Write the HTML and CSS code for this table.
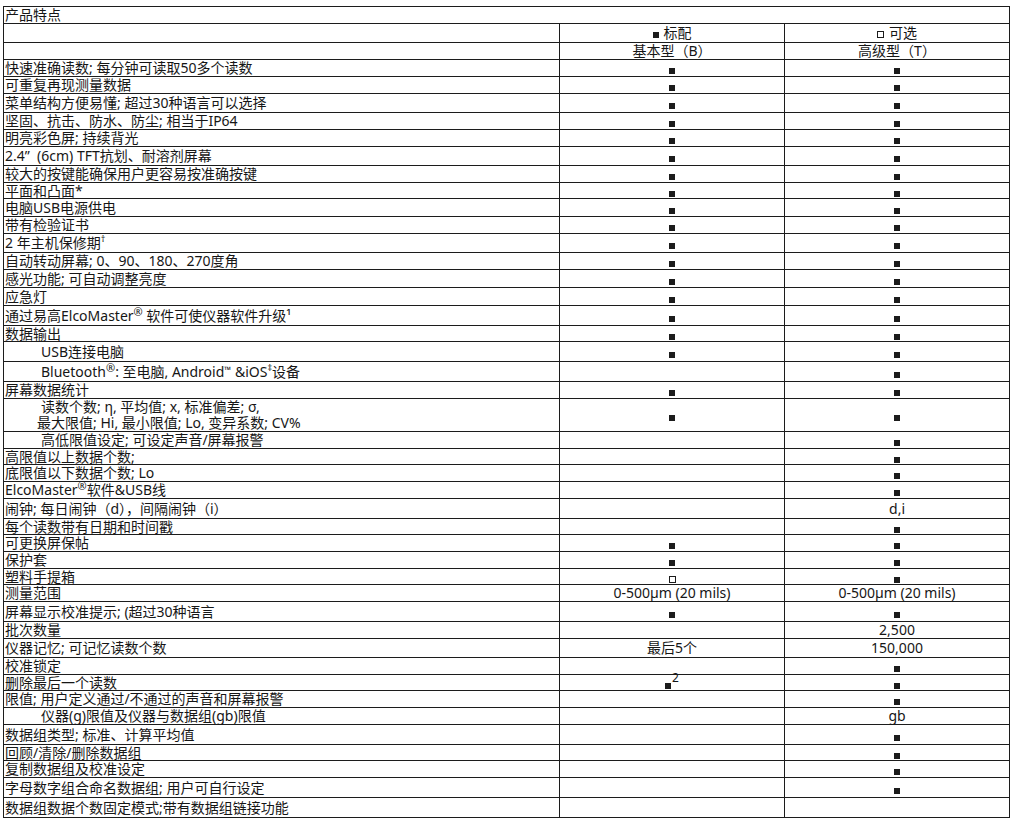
FILE: index.html
```html
<!DOCTYPE html>
<html lang="zh-CN">
<head>
<meta charset="utf-8">
<title>产品特点</title>
<link rel="stylesheet" href="styles.css">
</head>
<body>
<div class="page">
<table class="spec">
  <colgroup><col class="c-feat"><col class="c-opt"><col class="c-opt"></colgroup>
  <tbody>
    <tr class="h17"><td colspan="3">产品特点</td></tr>
    <tr class="h19"><td></td><td class="ctr"><span class="sq key"></span>标配</td><td class="ctr"><span class="sq open key"></span>可选</td></tr>
    <tr class="h17"><td></td><td class="ctr">基本型（B）</td><td class="ctr">高级型（T）</td></tr>
    <tr class="h17"><td>快速准确读数; 每分钟可读取50多个读数</td><td class="ctr"><span class="sq"></span></td><td class="ctr"><span class="sq"></span></td></tr>
    <tr class="h17"><td>可重复再现测量数据</td><td class="ctr"><span class="sq"></span></td><td class="ctr"><span class="sq"></span></td></tr>
    <tr class="h19"><td>菜单结构方便易懂; 超过30种语言可以选择</td><td class="ctr"><span class="sq"></span></td><td class="ctr"><span class="sq"></span></td></tr>
    <tr class="h17"><td>坚固、抗击、防水、防尘; 相当于IP64</td><td class="ctr"><span class="sq"></span></td><td class="ctr"><span class="sq"></span></td></tr>
    <tr class="h17"><td>明亮彩色屏; 持续背光</td><td class="ctr"><span class="sq"></span></td><td class="ctr"><span class="sq"></span></td></tr>
    <tr class="h19"><td>2.4”&nbsp;&nbsp;(6cm) TFT抗划、耐溶剂屏幕</td><td class="ctr"><span class="sq"></span></td><td class="ctr"><span class="sq"></span></td></tr>
    <tr class="h17"><td>较大的按键能确保用户更容易按准确按键</td><td class="ctr"><span class="sq"></span></td><td class="ctr"><span class="sq"></span></td></tr>
    <tr class="h16"><td>平面和凸面*</td><td class="ctr"><span class="sq"></span></td><td class="ctr"><span class="sq"></span></td></tr>
    <tr class="h18"><td>电脑USB电源供电</td><td class="ctr"><span class="sq"></span></td><td class="ctr"><span class="sq"></span></td></tr>
    <tr class="h17"><td>带有检验证书</td><td class="ctr"><span class="sq"></span></td><td class="ctr"><span class="sq"></span></td></tr>
    <tr class="h19"><td>2 年主机保修期<sup class="mark">†</sup></td><td class="ctr"><span class="sq"></span></td><td class="ctr"><span class="sq"></span></td></tr>
    <tr class="h17"><td>自动转动屏幕; 0、90、180、270度角</td><td class="ctr"><span class="sq"></span></td><td class="ctr"><span class="sq"></span></td></tr>
    <tr class="h18"><td>感光功能; 可自动调整亮度</td><td class="ctr"><span class="sq"></span></td><td class="ctr"><span class="sq"></span></td></tr>
    <tr class="h18"><td>应急灯</td><td class="ctr"><span class="sq"></span></td><td class="ctr"><span class="sq"></span></td></tr>
    <tr class="h20"><td>通过易高ElcoMaster<sup class="reg">®</sup> 软件可使仪器软件升级¹</td><td class="ctr"><span class="sq"></span></td><td class="ctr"><span class="sq"></span></td></tr>
    <tr class="h16"><td>数据输出</td><td class="ctr"><span class="sq"></span></td><td class="ctr"><span class="sq"></span></td></tr>
    <tr class="h20"><td class="ind">USB连接电脑</td><td class="ctr"><span class="sq"></span></td><td class="ctr"><span class="sq"></span></td></tr>
    <tr class="h20"><td class="ind">Bluetooth<sup class="reg">®</sup>: 至电脑, Android<sup class="tm">™</sup> &amp;iOS<sup class="mark">‡</sup>设备</td><td></td><td class="ctr"><span class="sq"></span></td></tr>
    <tr class="h17"><td>屏幕数据统计</td><td class="ctr"><span class="sq"></span></td><td class="ctr"><span class="sq"></span></td></tr>
    <tr class="h32"><td class="ind2"><span class="first">读数个数; η, 平均值; x, 标准偏差; σ,</span><br>最大限值; Hi, 最小限值; Lo, 变异系数; CV%</td><td class="ctr"><span class="sq"></span></td><td class="ctr"><span class="sq"></span></td></tr>
    <tr class="h17"><td class="ind">高低限值设定; 可设定声音/屏幕报警</td><td></td><td class="ctr"><span class="sq"></span></td></tr>
    <tr class="h16"><td>高限值以上数据个数;</td><td></td><td class="ctr"><span class="sq"></span></td></tr>
    <tr class="h17"><td>底限值以下数据个数; Lo</td><td></td><td class="ctr"><span class="sq"></span></td></tr>
    <tr class="h17"><td>ElcoMaster<sup class="reg">®</sup>软件&amp;USB线</td><td></td><td class="ctr"><span class="sq"></span></td></tr>
    <tr class="h20"><td>闹钟; 每日闹钟（d），间隔闹钟（i）</td><td></td><td class="ctr">d,i</td></tr>
    <tr class="h16"><td>每个读数带有日期和时间戳</td><td></td><td class="ctr"><span class="sq"></span></td></tr>
    <tr class="h17"><td>可更换屏保帖</td><td class="ctr"><span class="sq"></span></td><td class="ctr"><span class="sq"></span></td></tr>
    <tr class="h17"><td>保护套</td><td class="ctr"><span class="sq"></span></td><td class="ctr"><span class="sq"></span></td></tr>
    <tr class="h16"><td>塑料手提箱</td><td class="ctr"><span class="sq open"></span></td><td class="ctr"><span class="sq"></span></td></tr>
    <tr class="h17"><td>测量范围</td><td class="ctr">0-500µm (20 mils)</td><td class="ctr">0-500µm (20 mils)</td></tr>
    <tr class="h20"><td>屏幕显示校准提示; (超过30种语言</td><td class="ctr"><span class="sq"></span></td><td class="ctr"><span class="sq"></span></td></tr>
    <tr class="h17"><td>批次数量</td><td></td><td class="ctr">2,500</td></tr>
    <tr class="h19"><td>仪器记忆; 可记忆读数个数</td><td class="ctr">最后5个</td><td class="ctr">150,000</td></tr>
    <tr class="h17"><td>校准锁定</td><td></td><td class="ctr"><span class="sq"></span></td></tr>
    <tr class="h16"><td>删除最后一个读数</td><td class="ctr"><span class="sq"></span><sup class="fn">2</sup></td><td class="ctr"><span class="sq"></span></td></tr>
    <tr class="h17"><td>限值; 用户定义通过/不通过的声音和屏幕报警</td><td></td><td class="ctr"><span class="sq"></span></td></tr>
    <tr class="h17"><td class="ind">仪器(g)限值及仪器与数据组(gb)限值</td><td></td><td class="ctr">gb</td></tr>
    <tr class="h20"><td>数据组类型; 标准、计算平均值</td><td></td><td class="ctr"><span class="sq"></span></td></tr>
    <tr class="h16"><td>回顾/清除/删除数据组</td><td></td><td class="ctr"><span class="sq"></span></td></tr>
    <tr class="h17"><td>复制数据组及校准设定</td><td></td><td class="ctr"><span class="sq"></span></td></tr>
    <tr class="h20"><td>字母数字组合命名数据组; 用户可自行设定</td><td></td><td class="ctr"><span class="sq"></span></td></tr>
    <tr class="h20"><td>数据组数据个数固定模式;带有数据组链接功能</td><td></td><td></td></tr>
  </tbody>
</table>
</div>
</body>
</html>
```

FILE: styles.css
```css
html, body {
  margin: 0;
  padding: 0;
  background: #ffffff;
}

.page {
  padding: 6px 0 0 3px;
}

.spec {
  border-collapse: collapse;
  table-layout: fixed;
  width: 1007px;
  font-family: "Noto Sans", "Noto Sans CJK SC", sans-serif;
  font-size: 14px;
  line-height: 14px;
  color: #161616;
}

.c-feat { width: 556px; }
.c-opt { width: 225px; }

.spec td {
  border: 1px solid #1c1c1c;
  padding: 0 0 0 1px;
  vertical-align: middle;
  white-space: nowrap;
}

.h16 td { height: 15px; }
.h17 td { height: 16px; }
.h18 td { height: 17px; }
.h19 td { height: 18px; }
.h20 td { height: 19px; }
.h32 td { height: 30px; }

.spec td.ctr {
  text-align: center;
  padding: 0;
}

.spec td.ind { padding-left: 37px; }
.spec td.ind2 {
  padding-left: 33px;
  line-height: 16px;
}
.ind2 .first { padding-left: 4px; }

.sq {
  display: inline-block;
  width: 6px;
  height: 6px;
  background: #1c1c1c;
  vertical-align: -1px;
}

.sq.open {
  background: #ffffff;
  border: 1px solid #1c1c1c;
  width: 5px;
  height: 5px;
}

.sq.key {
  margin-right: 5px;
  vertical-align: 0;
}

sup {
  line-height: 0;
}

.reg {
  font-size: 11px;
  vertical-align: 5px;
}

.mark {
  font-size: 9px;
  vertical-align: 6px;
}

.tm {
  font-size: 9px;
  vertical-align: 4px;
}

.fn {
  font-size: 12px;
  vertical-align: 6px;
  margin-left: 1px;
}
```
